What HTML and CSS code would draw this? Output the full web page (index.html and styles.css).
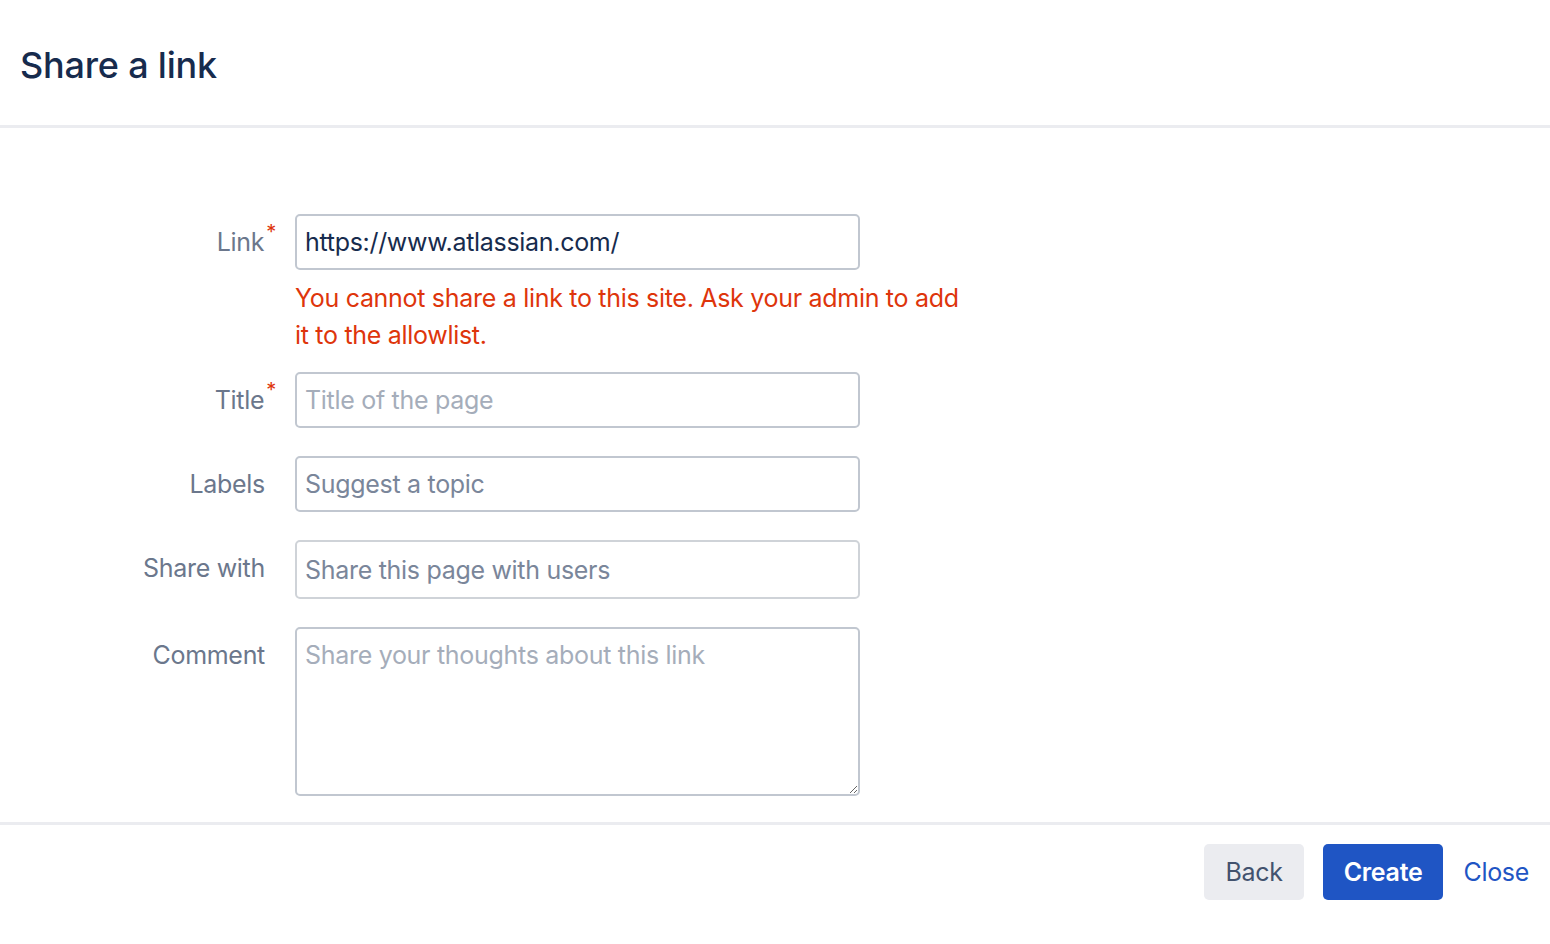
FILE: index.html
```html
<!DOCTYPE html>
<html lang="en">
<head>
  <meta charset="UTF-8" />
  <meta name="viewport" content="width=device-width, initial-scale=1.0"/>
  <title>Share a link</title>
  <link rel="stylesheet" href="styles.css">
</head>
<body>

  <div class="dialog">
    <div class="header">
      <h2>Share a link</h2>
    </div>

    <form class="content" onsubmit="return false">
      <div class="field-group">
        <label for="link">Link<span class="req">*</span></label>
        <div class="field">
          <input type="text" id="link" class="text" value="https://www.atlassian.com/" />
          <div class="error">You cannot share a link to this site. Ask your admin to add it to the allowlist.</div>
        </div>
      </div>

      <div class="field-group">
        <label for="title">Title<span class="req">*</span></label>
        <div class="field">
          <input type="text" id="title" class="text light" placeholder="Title of the page" />
        </div>
      </div>

      <div class="field-group">
        <label for="labels">Labels</label>
        <div class="field">
          <input type="text" id="labels" class="text" placeholder="Suggest a topic" />
        </div>
      </div>

      <div class="field-group">
        <label for="share">Share with</label>
        <div class="field">
          <input type="text" id="share" class="text select" placeholder="Share this page with users" />
        </div>
      </div>

      <div class="field-group">
        <label for="comment">Comment</label>
        <div class="field">
          <textarea id="comment" class="textarea" placeholder="Share your thoughts about this link"></textarea>
        </div>
      </div>
    </form>

    <div class="footer">
      <button class="button">Back</button>
      <button class="button primary">Create</button>
      <button class="button link">Close</button>
    </div>
  </div>

</body>
</html>
```

FILE: styles.css
```css
body {
  font-family: Inter, "Noto Sans", Arial, sans-serif;
  margin: 0;
  background: #fff;
  color: #172b4d;
  letter-spacing: -0.3px;
}

.dialog {
  min-height: 100vh;
  display: flex;
  flex-direction: column;
}

.header {
  height: 121px;
  padding: 4px 20px 0;
  display: flex;
  align-items: center;
  border-bottom: 3px solid #ebecf0;
}

.header h2 {
  margin: 0;
  font-size: 36px;
  font-weight: 500;
  letter-spacing: -0.2px;
  color: #172b4d;
}

.content {
  padding: 86px 0 26px;
  margin: 0;
}

.field-group {
  display: grid;
  grid-template-columns: 265px 700px;
  column-gap: 30px;
  margin-bottom: 28px;
}

.field-group:first-child {
  margin-bottom: 18px;
}

.field-group:last-child {
  margin-bottom: 0;
}

.field-group label {
  text-align: right;
  color: #6b778c;
  font-size: 25px;
  line-height: 37px;
  padding-top: 10px;
}

.req {
  color: #de350b;
  font-size: 20px;
  vertical-align: 12px;
  line-height: 0;
  margin-left: 2px;
  margin-right: -11px;
}

.text,
.textarea {
  box-sizing: border-box;
  width: 565px;
  height: 56px;
  padding: 0 8px;
  font-family: inherit;
  font-size: 25px;
  letter-spacing: -0.3px;
  color: #172b4d;
  border: 2px solid #c1c7d0;
  border-radius: 5px;
  background: #fff;
  outline: none;
  display: block;
}

.text::placeholder,
.textarea::placeholder {
  color: #7a869a;
  opacity: 1;
}

.text.light::placeholder,
.textarea::placeholder {
  color: #a5adba;
}

.text.select {
  height: 59px;
  border-color: #cfd3d8;
}

.textarea {
  height: 169px;
  padding: 8px 8px;
  line-height: 37px;
  resize: vertical;
}

.error {
  width: 680px;
  margin-top: 10px;
  color: #de350b;
  font-size: 25px;
  line-height: 37px;
}

.footer {
  border-top: 3px solid #ebecf0;
  padding: 19px 21px 0;
  display: flex;
  justify-content: flex-end;
  gap: 19px;
}

.button {
  height: 56px;
  padding: 0 21px;
  font-family: inherit;
  font-size: 25px;
  letter-spacing: -0.3px;
  border: none;
  border-radius: 5px;
  background: #ebecf0;
  color: #42526e;
  cursor: pointer;
}

.button.primary {
  background: #1f55c4;
  color: #fff;
  font-weight: 600;
}

.button.link {
  background: none;
  color: #1f55c4;
  padding: 0;
  margin-left: 1px;
}
```
